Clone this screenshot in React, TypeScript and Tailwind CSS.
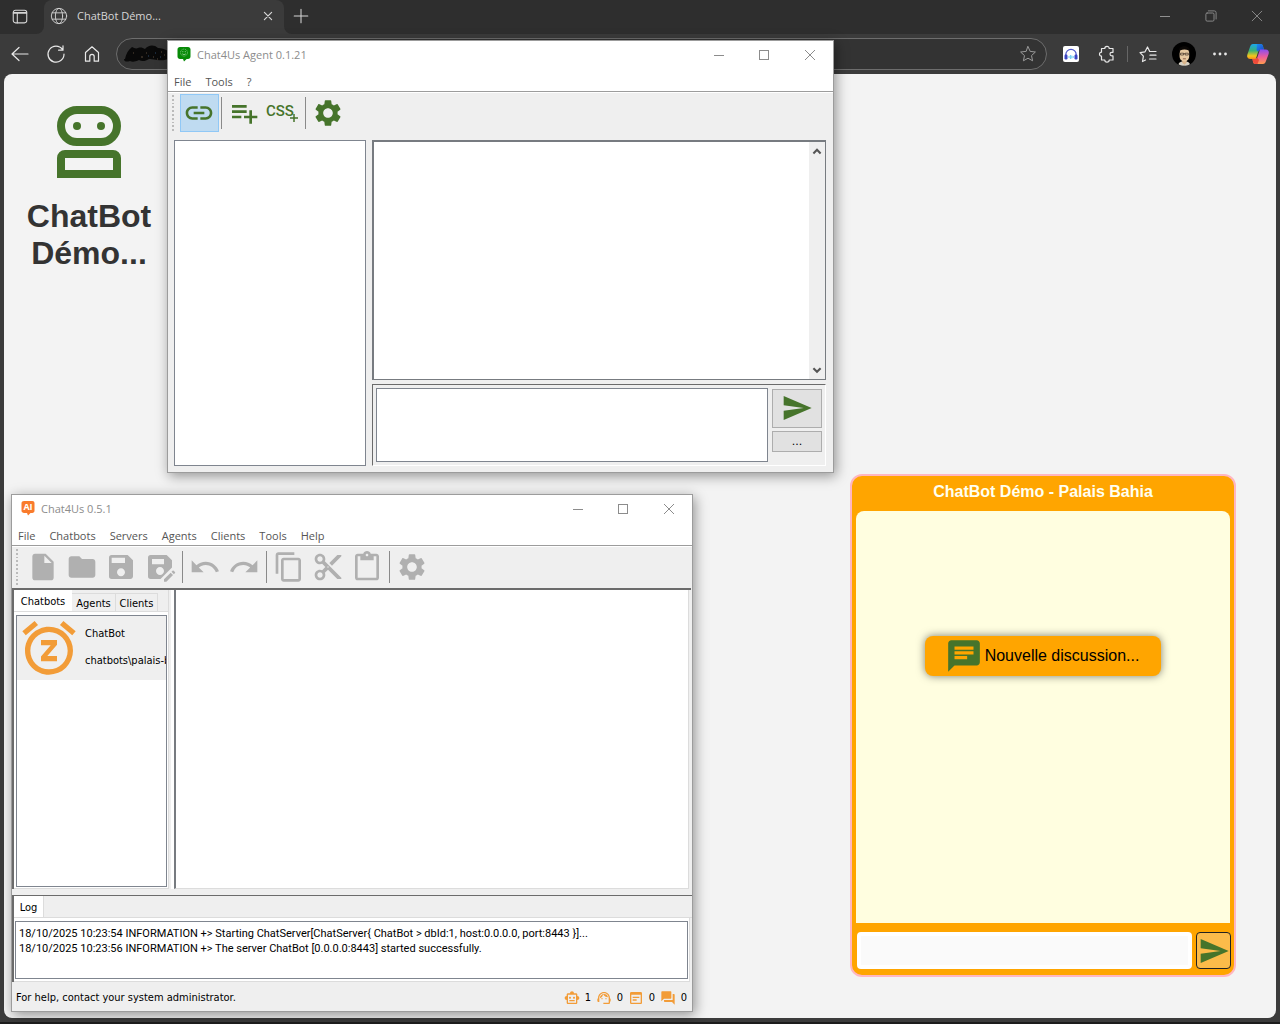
import React from "react";
import type { ReactNode } from "react";
import type { IconType } from "react-icons";
import {
  MdChat,
  MdContentCopy,
  MdContentCut,
  MdContentPaste,
  MdFolder,
  MdInsertDriveFile,
  MdLink,
  MdOutlineSmartToy,
  MdPlaylistAdd,
  MdQuestionAnswer,
  MdRedo,
  MdSave,
  MdSaveAs,
  MdSend,
  MdSettings,
  MdSnooze,
  MdSupportAgent,
  MdUndo,
  MdWysiwyg,
} from "react-icons/md";

/* ---------- Browser icons ---------- */

function Line({ children, className = "size-5" }: { children: ReactNode; className?: string }) {
  return (
    <svg viewBox="0 0 20 20" fill="none" stroke="currentColor" strokeLinecap="round" strokeLinejoin="round" className={className} aria-hidden="true">
      {children}
    </svg>
  );
}

const STAR = "M10 2.6l2.2 4.8 5.2.6-3.9 3.6 1.1 5.2-4.6-2.6-4.6 2.6 1.1-5.2L2.6 8l5.2-.6z";

function Avatar() {
  return (
    <svg viewBox="0 0 24 24" className="size-6" aria-hidden="true">
      <circle cx="12" cy="12" r="12" fill="#000" />
      <path d="M6.500 22.200c.4-1.600 1.500-2.200 3.200-2.700h5c1.700.5 2.800 1.100 3.200 2.700-3.200 2.200-8.200 2.200-11.400 0z" fill="#d8d2c4" />
      <path d="M10.200 17.500h4.400v3.200l-2.200 2.100-2.200-2.100z" fill="#d9b48a" />
      <path d="M7.600 9.500c0-2.600 1.700-3.800 4.800-3.800s4.800 1.200 4.800 3.800v4.800c0 2.900-2 5.200-4.800 5.200s-4.800-2.300-4.800-5.200z" fill="#e6c8a0" />
      <path d="M7.200 11.500C6 6.500 8.600 4.200 12.400 4.200s6.400 2.300 5.200 7.300l-1.200-3.300c-2.600-1-5.400-1-8 0z" fill="#0b0806" />
      <path d="M8.500 11.200h3.100v1.800H8.500zM13.200 11.200h3.100v1.800h-3.100zM11.600 11.700h1.600" stroke="#3b2d22" strokeWidth=".7" fill="none" />
      <path d="M10.900 16.800h3" stroke="#7a4636" strokeWidth=".8" />
    </svg>
  );
}

function Copilot() {
  return (
    <svg viewBox="0 0 24 24" className="size-6" aria-hidden="true">
      <defs>
        <linearGradient id="cpA" x1="0" y1="0" x2="0" y2="1">
          <stop offset="0" stopColor="#19a7ee" />
          <stop offset=".45" stopColor="#3bb273" />
          <stop offset=".8" stopColor="#f6c719" />
          <stop offset="1" stopColor="#f58b1f" />
        </linearGradient>
        <linearGradient id="cpB" x1="0" y1="0" x2="0" y2="1">
          <stop offset="0" stopColor="#8a4df0" />
          <stop offset=".5" stopColor="#ec5c9c" />
          <stop offset="1" stopColor="#ff9a4d" />
        </linearGradient>
        <linearGradient id="cpC" x1="0" y1="0" x2="1" y2="1">
          <stop offset="0" stopColor="#1b8df0" />
          <stop offset="1" stopColor="#1d3fc4" />
        </linearGradient>
      </defs>
      <path d="M7 2h7.500c1.400 0 2.100.8 2.500 2.200L18 8h-3.500c-1.200 0-2 .6-2.400 1.800L9.800 17H4.500c-2.600 0-3.900-1.700-3.200-4.200L4 5c.6-2 1.500-3 3-3z" fill="url(#cpA)" />
      <path d="M11 2h3.500c1.400 0 2.100.8 2.500 2.200L18 8h-3.500c-1.400 0-2 .6-2.400 1.800L10.500 8z" fill="url(#cpC)" />
      <path d="M17 22H9.500C8.100 22 7.400 21.200 7 19.800L6.500 17H9c1.200 0 2-.6 2.400-1.800L14 7.500h5.500c2.600 0 3.900 1.700 3.200 4.200L20 19c-.6 2-1.500 3-3 3z" fill="url(#cpB)" />
      <path d="M6.500 17H9c1 0 1.800-.5 2.200-1.400L13 18l-1.500 4h-2C8.100 22 7.400 21.200 7 19.800z" fill="#ee4b3a" />
    </svg>
  );
}

function HeadphonesBadge() {
  return (
    <svg viewBox="0 0 16 16" className="size-4" aria-hidden="true">
      <rect width="16" height="16" rx="2" fill="#fff" />
      <path d="M2.800 10V8.500a5.200 5.200 0 0 1 10.400 0V10" fill="none" stroke="#4a55c8" strokeWidth="1.200" />
      <rect x="1.500" y="8.500" width="3" height="5" rx="1.200" fill="#3b45c4" />
      <rect x="11.500" y="8.500" width="3" height="5" rx="1.200" fill="#3b45c4" />
      <path d="M6 10v2M7.400 9v4M8.800 9.500v3M10.200 10v2" stroke="#58c4f0" strokeWidth=".9" />
    </svg>
  );
}

function Scribble() {
  return (
    <svg viewBox="0 0 44 18" className="h-[18px] w-11" aria-hidden="true">
      <path
        d="M1 14C2 9 4 5 8 2c2 1 4 2 6 1 3-1 5 0 7 1 3-4 9-5 13-1 3 0 7 1 10 3v8c-5 2-8 1-11 1-4-1-6-1-8-1-3 2-7 3-10 1-4 2-7 2-9 1-3 1-6 1-6-2z"
        fill="#090909"
      />
      <path d="M9 8h1M17 12h2M22 8h1M37 7h1M40 10h1M29 12h1M33 14h1" stroke="#5a4a3a" strokeWidth="1" />
      <path d="M24 11h1M31 8h1M36 12h1" stroke="#2f4a6a" strokeWidth="1" />
    </svg>
  );
}

/* ---------- Application icons ---------- */

function BotLogo() {
  return (
    <svg viewBox="0 0 64 72" className="h-[72px] w-16" fill="none" stroke="#46742b" strokeWidth="8" role="img" aria-label="ChatBot">
      <rect x="4" y="4" width="56" height="32" rx="16" />
      <path d="M4 68V52a4 4 0 0 1 4-4h48a4 4 0 0 1 4 4v16z" />
      <circle cx="20" cy="20" r="4" fill="#46742b" stroke="none" />
      <circle cx="44" cy="20" r="4" fill="#46742b" stroke="none" />
    </svg>
  );
}

function AgentAppIcon() {
  return (
    <svg viewBox="0 0 16 16" className="size-4" aria-hidden="true">
      <path d="M4 0h8c1.500 0 2.500 1 2.500 2.500v7c0 1.500-1 2.500-2.500 2.500h-1.300L8 14.500 7 12H4c-1.500 0-2.500-1-2.500-2.500v-7C1.500 1 2.500 0 4 0z" fill="#078a07" />
      <circle cx="8" cy="5.600" r="3.500" fill="none" stroke="#8fd08f" strokeWidth=".7" strokeDasharray="1.200 .7" />
      <path d="M6.800 4.200v1M9.300 4.200v1M6.300 6.800c1 1 2.500 1 3.500 0" stroke="#c9ecc9" strokeWidth=".7" fill="none" />
    </svg>
  );
}

function ServerAppIcon() {
  return (
    <span className="relative block size-4">
      <svg viewBox="0 0 16 16" className="size-4" aria-hidden="true">
        <path d="M4 0h8.300c1.300 0 2.200.9 2.200 2.200v7.600c0 1.300-.9 2.200-2.200 2.200H10.500L8 14.500 7 12H4c-1.300 0-2.500-.9-2.500-2.200V2.200C1.500.9 2.700 0 4 0z" fill="#f97b2c" />
      </svg>
      <span className="absolute inset-x-0 top-0 text-center text-[9px] leading-3 font-bold text-white">AI</span>
    </span>
  );
}

function CssAddIcon() {
  return (
    <span className="relative block h-8 w-8 text-[#46742b]">
      <span className="absolute top-1 left-0 font-['Roboto',sans-serif] text-[15px] leading-5 font-medium">CSS</span>
      <svg viewBox="0 0 8 8" className="absolute right-0 bottom-[7px] size-2" stroke="currentColor" strokeWidth="1.500" aria-hidden="true">
        <path d="M4 0v8M0 4h8" />
      </svg>
    </span>
  );
}

/* ---------- Shared window parts ---------- */

function WindowControls() {
  return (
    <div className="flex h-7 text-[#8c8c8c]">
      <button aria-label="Minimize" className="flex w-[45px] items-center justify-center">
        <span className="h-px w-2.5 bg-current" />
      </button>
      <button aria-label="Maximize" className="flex w-[45px] items-center justify-center">
        <span className="size-2.5 border border-current" />
      </button>
      <button aria-label="Close" className="flex w-[47px] items-center justify-center">
        <svg viewBox="0 0 10 10" className="size-2.5" stroke="currentColor" aria-hidden="true">
          <path d="M0 0l10 10M10 0L0 10" />
        </svg>
      </button>
    </div>
  );
}

function AppWindow({
  title,
  icon,
  menus,
  className,
  children,
}: {
  title: string;
  icon: ReactNode;
  menus: string[];
  className: string;
  children: ReactNode;
}) {
  return (
    <section
      aria-label={title}
      className={`absolute flex flex-col border border-[#9c9c9c] bg-[#efefef] shadow-[2px_3px_12px_rgba(0,0,0,0.4)] ${className}`}
    >
      <header className="flex h-[30px] shrink-0 items-start justify-between bg-white pl-2">
        <h2 className="flex items-center gap-[5px] pt-1.5 font-['Open_Sans',sans-serif] text-[11px] leading-4 text-[#8c8c8c]">
          {icon}
          {title}
        </h2>
        <WindowControls />
      </header>
      <nav className="flex h-5 shrink-0 items-center gap-[14px] bg-white pt-0.5 pl-1.5 font-['Open_Sans',sans-serif] text-[11px] leading-4 text-[#555]">
        {menus.map((m) => (
          <button key={m}>{m}</button>
        ))}
      </nav>
      <div className="h-0.5 shrink-0 border-t border-[#9c9c9c] bg-white" />
      {children}
    </section>
  );
}

function Handle() {
  return (
    <span className="ml-1 mr-1.5 flex w-0.5 flex-col gap-0.5 py-px">
      {Array.from({ length: 10 }, (_, i) => (
        <span key={i} className="size-0.5 bg-[#bbb]" />
      ))}
    </span>
  );
}

function Separator() {
  return (
    <span className="flex w-1.5 py-[3px] pl-0.5">
      <span className="w-px bg-[#8a8a8a]" />
    </span>
  );
}

function ToolButton({ label, icon: Icon, muted = false }: { label: string; icon: IconType; muted?: boolean }) {
  return (
    <button aria-label={label} className={`flex w-[39px] items-center pl-[3px] ${muted ? "text-[#b0b0b0]" : "text-[#46742b]"}`}>
      <Icon className="size-8" />
    </button>
  );
}

/* ---------- Browser ---------- */

function BrowserChrome() {
  return (
    <header className="font-['Open_Sans',sans-serif] text-[#d6d6d6]">
      <div className="flex h-[34px] bg-[#3b3b3b]">
        <button aria-label="Tab actions" className="flex w-11 items-center justify-start rounded-br-lg bg-[#2e2e2e] pl-[11px]">
          <Line className="size-[18px]">
            <rect x="2.500" y="2.500" width="15" height="14" rx="2.500" strokeWidth="1.200" />
            <path d="M3 5.500h14" strokeWidth="2" />
            <path d="M7 6v10.500" strokeWidth="1.200" />
          </Line>
        </button>
        <div className="w-[240px] bg-[#2e2e2e]">
          <div className="flex h-full items-center rounded-t-lg bg-[#3b3b3b] pr-2.5 pb-0.5 pl-1.5">
            <Line className="size-[18px]">
              <circle cx="10" cy="10" r="8.500" />
              <ellipse cx="10" cy="10" rx="4" ry="8.500" />
              <path d="M2.500 6.500h15M2.500 13.500h15" />
            </Line>
            <span className="ml-[9px] grow text-[11px] leading-4">ChatBot Démo...</span>
            <button aria-label="Close tab">
              <Line className="size-3">
                <path d="M4 4l12 12M16 4L4 16" strokeWidth="2" />
              </Line>
            </button>
          </div>
        </div>
        <div className="flex grow items-center justify-between rounded-bl-lg bg-[#2e2e2e] pb-0.5 pl-[9px]">
          <button aria-label="New tab">
            <Line className="size-4">
              <path d="M10 1.500v17M1.500 10h17" strokeWidth="1.300" />
            </Line>
          </button>
          <div className="flex text-[#909090]">
            <button aria-label="Minimize" className="flex w-[46px] items-center justify-center">
              <span className="h-px w-2.5 bg-current" />
            </button>
            <button aria-label="Restore" className="flex w-[46px] items-center justify-center">
              <Line className="size-3">
                <rect x="1.500" y="5" width="13.500" height="13.500" rx="2" strokeWidth="1.500" />
                <path d="M5.500 1.500h10a3 3 0 0 1 3 3V15" strokeWidth="1.500" />
              </Line>
            </button>
            <button aria-label="Close" className="flex w-[46px] items-center justify-center">
              <Line className="size-3">
                <path d="M2 2l16 16M18 2L2 18" strokeWidth="1.500" />
              </Line>
            </button>
          </div>
        </div>
      </div>
      <div className="flex h-10 items-center bg-[#3b3b3b] pl-2.5 text-[#e8e8e8]">
        <div className="flex gap-4">
          <button aria-label="Back">
            <Line>
              <path d="M2 10h16M9 3.500L2 10l7 6.500" strokeWidth="1.200" />
            </Line>
          </button>
          <button aria-label="Refresh">
            <Line>
              <path d="M16.500 5.500A8 8 0 1 0 18 10M17 1.800v4.400h-4.400" strokeWidth="1.200" />
            </Line>
          </button>
          <button aria-label="Home">
            <Line>
              <path d="M3.500 8.500L10 2.800l6.500 5.700v8.700h-4.300v-4.700a2.200 2.200 0 0 0-4.400 0v4.700H3.500z" strokeWidth="1.200" />
            </Line>
          </button>
        </div>
        <div className="ml-3.5 flex h-8 grow items-center rounded-full border border-[#6d6d6d] bg-[#333] pr-2 pl-[7px]">
          <Scribble />
          <input aria-label="Address" className="min-w-0 grow bg-transparent outline-none" />
          <button aria-label="Add to favorites" className="text-[#9a9a9a]">
            <Line>
              <path d={STAR} />
            </Line>
          </button>
        </div>
        <div className="flex items-center pr-2.5 pl-4">
          <button aria-label="Audio extension">
            <HeadphonesBadge />
          </button>
          <button aria-label="Extensions" className="ml-[18px]">
            <Line>
              <path
                d="M4.500 4.500h3.300a2.200 2.200 0 0 1 4.400 0h3.800v3.800h-1.200a1.800 1.800 0 0 0 0 3.600H16v4.100h-3.800a2.200 2.200 0 0 1-4.400 0H4.500v-3.800a2 2 0 0 1 0-4z"
                strokeWidth="1.200"
              />
            </Line>
          </button>
          <span className="mx-2.5 h-4 w-px bg-[#666]" />
          <button aria-label="Favorites">
            <Line>
              <path d="M7.500 16l-3 1.500.9-5.300L2 8.600l5-.8L9.500 3l2.200 4.500h6.300M12 11.200h6M11.500 15h6.500" strokeWidth="1.200" />
            </Line>
          </button>
          <button aria-label="Profile" className="ml-3.5">
            <Avatar />
          </button>
          <button aria-label="Settings and more" className="ml-3.5">
            <Line>
              <path d="M4.500 10h.01M10 10h.01M15.500 10h.01" strokeWidth="2.800" />
            </Line>
          </button>
          <button aria-label="Copilot" className="ml-4">
            <Copilot />
          </button>
        </div>
      </div>
    </header>
  );
}

/* ---------- Agent window ---------- */

function ScrollArrow({ label, d }: { label: string; d: string }) {
  return (
    <button aria-label={label}>
      <Line className="size-3">
        <path d={d} strokeWidth="3.500" strokeLinecap="butt" strokeLinejoin="miter" />
      </Line>
    </button>
  );
}

function AgentWindow() {
  return (
    <AppWindow title="Chat4Us Agent 0.1.21" icon={<AgentAppIcon />} menus={["File", "Tools", "?"]} className="top-10 left-[167px] h-[433px] w-[667px]">
      <div className="flex h-10 shrink-0 py-px">
        <Handle />
        <button aria-label="Connect" aria-pressed="true" className="flex w-[39px] items-center border border-[#90c8f6] bg-[#bfdbf1] pl-0.5 text-[#46742b]">
          <MdLink className="size-8" />
        </button>
        <Separator />
        <ToolButton label="Add to list" icon={MdPlaylistAdd} />
        <button aria-label="Add CSS" className="flex w-[39px] items-center pl-0.5">
          <CssAddIcon />
        </button>
        <Separator />
        <ToolButton label="Settings" icon={MdSettings} />
      </div>
      <div className="flex min-h-0 grow gap-1.5 pt-[7px] pr-[7px] pb-1.5 pl-1.5">
        <ul aria-label="Conversations" className="w-48 border border-[#7f858f] bg-white" />
        <div className="flex grow flex-col gap-1">
          <div className="flex grow justify-end border border-t-2 border-l-2 border-[#777b80] bg-white">
            <div className="flex w-4 flex-col items-center justify-between bg-[#efefef] py-[3px] text-[#555]">
              <ScrollArrow label="Scroll up" d="M4 14l6-6 6 6" />
              <ScrollArrow label="Scroll down" d="M4 7l6 6 6-6" />
            </div>
          </div>
          <div className="flex h-[82px] gap-1 border border-t-[#6b6b6b] border-r-white border-b-white border-l-[#6b6b6b] p-[3px]">
            <textarea aria-label="Message" className="grow resize-none border border-[#7f858f] bg-white outline-none" />
            <div className="flex w-[50px] flex-col gap-[3px] pt-px">
              <button aria-label="Send" className="flex h-[39px] items-center justify-center border border-[#adadad] bg-[#e1e1e1] pb-0.5 text-[#46742b]">
                <MdSend className="size-8" />
              </button>
              <button className="h-[21px] border border-[#adadad] bg-[#e1e1e1] font-['DejaVu_Sans',sans-serif] text-[11px] leading-4 text-black">...</button>
            </div>
          </div>
        </div>
      </div>
    </AppWindow>
  );
}

/* ---------- Server window ---------- */

const STATUS: { label: string; icon: IconType; value: number }[] = [
  { label: "Chatbots", icon: MdOutlineSmartToy, value: 1 },
  { label: "Agents", icon: MdSupportAgent, value: 0 },
  { label: "Clients", icon: MdWysiwyg, value: 0 },
  { label: "Chats", icon: MdQuestionAnswer, value: 0 },
];

function ServerWindow() {
  return (
    <AppWindow
      title="Chat4Us 0.5.1"
      icon={<ServerAppIcon />}
      menus={["File", "Chatbots", "Servers", "Agents", "Clients", "Tools", "Help"]}
      className="top-[494px] left-[11px] h-[518px] w-[682px]"
    >
      <div className="flex h-[41px] shrink-0 pt-px pb-0.5">
        <Handle />
        <ToolButton muted label="New" icon={MdInsertDriveFile} />
        <ToolButton muted label="Open" icon={MdFolder} />
        <ToolButton muted label="Save" icon={MdSave} />
        <ToolButton muted label="Save as" icon={MdSaveAs} />
        <Separator />
        <ToolButton muted label="Undo" icon={MdUndo} />
        <ToolButton muted label="Redo" icon={MdRedo} />
        <Separator />
        <ToolButton muted label="Copy" icon={MdContentCopy} />
        <ToolButton muted label="Cut" icon={MdContentCut} />
        <ToolButton muted label="Paste" icon={MdContentPaste} />
        <Separator />
        <ToolButton muted label="Settings" icon={MdSettings} />
      </div>
      <div className="mr-px flex min-h-0 grow border-t-2 border-[#6b6b6b] pr-0.5 font-['DejaVu_Sans_Condensed','DejaVu_Sans',sans-serif] text-[11px] leading-4 text-black">
        <div className="flex w-[157px] flex-col border-r border-l-2 border-r-[#dcdcdc] border-l-[#6b6b6b]">
          <div role="tablist" className="flex h-[22px] shrink-0 items-end border-b border-[#dcdcdc]">
            <button role="tab" aria-selected="true" className="h-[21px] w-[58px] bg-white pt-0.5">
              Chatbots
            </button>
            <button role="tab" aria-selected="false" className="h-[18px] w-11 border-t border-r border-[#dcdcdc] pt-0.5">
              Agents
            </button>
            <button role="tab" aria-selected="false" className="h-[18px] w-[42px] border-t border-r border-[#dcdcdc] pt-0.5">
              Clients
            </button>
          </div>
          <div className="flex grow border-b border-[#dcdcdc] bg-white pt-[3px] pr-px pb-px pl-0.5">
            <ul aria-label="Chatbots" className="w-full border border-[#7f858f]">
              <li className="flex h-16 overflow-hidden bg-[#efefef]">
                <MdSnooze className="size-16 shrink-0 text-[#f29c38]" />
                <div className="flex flex-col gap-[11px] pt-2.5 pl-1 whitespace-nowrap">
                  <span>ChatBot</span>
                  <span>chatbots\palais-b</span>
                </div>
              </li>
            </ul>
          </div>
        </div>
        <div className="ml-0.5 w-[3px] bg-white" />
        <div className="grow border-r border-b border-l-2 border-r-[#dcdcdc] border-b-[#dcdcdc] border-l-[#777b80] bg-white" />
      </div>
      <div className="mt-1.5 shrink-0 border-t border-l-2 border-[#6b6b6b] font-['DejaVu_Sans_Condensed','DejaVu_Sans',sans-serif] text-[11px] leading-4 text-black">
        <div role="tablist" className="flex h-[22px] items-end border-b border-[#dcdcdc]">
          <button role="tab" aria-selected="true" className="h-[21px] w-[30px] border-r border-[#dcdcdc] bg-white pt-0.5">
            Log
          </button>
        </div>
        <div className="mr-0.5 border-r border-b border-[#dcdcdc] bg-white pt-[3px] pr-px pb-0.5 pl-px">
          <div role="log" className="h-[58px] border border-[#7f858f] px-[3px] pt-1 font-['Roboto',sans-serif] text-[11px] leading-[15px]">
            <p>{"18/10/2025 10:23:54 INFORMATION +> Starting ChatServer[ChatServer{ ChatBot > dbId:1, host:0.0.0.0, port:8443 }]..."}</p>
            <p>{"18/10/2025 10:23:56 INFORMATION +> The server ChatBot [0.0.0.0:8443] started successfully."}</p>
          </div>
        </div>
      </div>
      <footer className="flex h-[29px] shrink-0 items-center justify-between pt-0.5 pr-[5px] pl-1 font-['DejaVu_Sans_Condensed','DejaVu_Sans',sans-serif] text-[11px] leading-4 text-black">
        <span>For help, contact your system administrator.</span>
        <div className="flex">
          {STATUS.map(({ label, icon: Icon, value }) => (
            <span key={label} title={label} className="flex w-8 items-center justify-end gap-[5px]">
              <Icon className="size-4 text-[#f29c38]" />
              {value}
            </span>
          ))}
        </div>
      </footer>
    </AppWindow>
  );
}

/* ---------- Chat widget ---------- */

function ChatWidget() {
  return (
    <section
      aria-label="Chat"
      className="absolute right-[44px] bottom-[45px] flex h-[503px] w-[386px] flex-col rounded-xl border-2 border-[#ffb6c1] bg-[#ffa500] px-1 pb-1.5 font-['Liberation_Sans',sans-serif] text-[16px]"
    >
      <h2 className="h-[35px] pt-1.5 text-center leading-5 font-bold text-[#fffff0]">ChatBot Démo - Palais Bahia</h2>
      <div className="flex grow flex-col items-center rounded-t-lg bg-[#fffee0] pt-[125px]">
        <button className="flex h-10 items-center rounded-lg bg-[#ffa500] px-5 leading-5 text-black shadow-[0_0_8px_rgba(0,0,0,0.5)]">
          <MdChat className="mr-0.5 size-[38px] text-[#46742b]" />
          <span className="pr-0.5">Nouvelle discussion...</span>
        </button>
      </div>
      <form className="mt-[9px] flex h-[37px] gap-1 pl-px" onSubmit={(e) => e.preventDefault()}>
        <input aria-label="Message" className="min-w-0 grow rounded border-4 border-white bg-[#fafafa] outline-none" />
        <button aria-label="Send" className="-mr-px flex w-[35px] items-center justify-center rounded border border-[#222] bg-[#fbbb4a] text-[#46742b]">
          <MdSend className="size-8 shrink-0" />
        </button>
      </form>
    </section>
  );
}

export default function App() {
  return (
    <div className="relative flex min-h-screen flex-col overflow-hidden border-b-2 border-[#1c1c1c] bg-[#3b3b3b]">
      <BrowserChrome />
      <main className="mx-1 mb-1 flex grow rounded-lg bg-[#f3f3f3]">
        <div className="flex w-[170px] flex-col items-center gap-5 pt-8">
          <BotLogo />
          <h1 className="text-center font-['Liberation_Sans',sans-serif] text-[32px] leading-[37px] font-bold text-[#333]">ChatBot Démo...</h1>
        </div>
      </main>
      <ChatWidget />
      <AgentWindow />
      <ServerWindow />
    </div>
  );
}
